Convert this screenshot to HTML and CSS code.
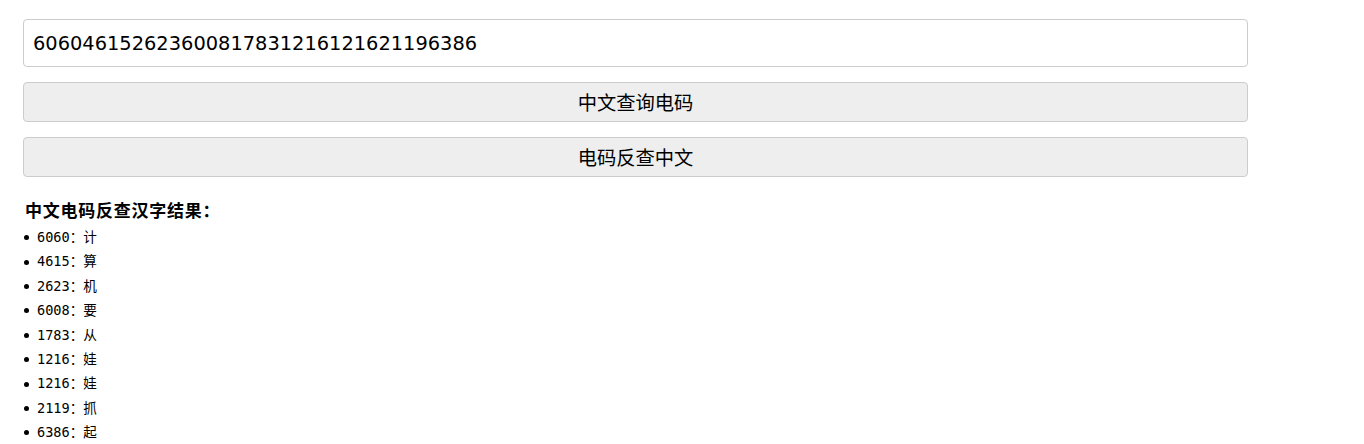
FILE: index.html
```html
<!DOCTYPE html>
<html lang="zh-CN">
<head>
<meta charset="utf-8">
<title>中文电码查询</title>
<link rel="stylesheet" href="styles.css">
</head>
<body>
<div class="page">
  <input class="code-input" type="text" value="606046152623600817831216121621196386">
  <button class="action-btn" type="button">中文查询电码</button>
  <button class="action-btn" type="button">电码反查中文</button>
  <div class="result">
    <h3 class="result-title">中文电码反查汉字结果：</h3>
    <ul class="result-list">
      <li>6060：计</li>
      <li>4615：算</li>
      <li>2623：机</li>
      <li>6008：要</li>
      <li>1783：从</li>
      <li>1216：娃</li>
      <li>1216：娃</li>
      <li>2119：抓</li>
      <li>6386：起</li>
    </ul>
  </div>
</div>
</body>
</html>
```

FILE: styles.css
```css
html, body {
  margin: 0;
  padding: 0;
  background: #fff;
}

.page {
  display: flex;
  flex-direction: column;
  gap: 15px;
  width: 1225px;
  padding: 19px 0 0 23px;
}

.code-input {
  box-sizing: border-box;
  width: 100%;
  height: 48px;
  margin: 0;
  padding: 0 9px;
  border: 1px solid #cccccc;
  border-radius: 4px;
  background: #fff;
  color: #000;
  font-family: "DejaVu Sans", "Noto Sans CJK SC", sans-serif;
  font-size: 19.4px;
  outline: none;
}

.action-btn {
  box-sizing: border-box;
  width: 100%;
  height: 40px;
  margin: 0;
  padding: 0;
  border: 1px solid #cccccc;
  border-radius: 4px;
  background: #eeeeee;
  color: #000;
  font-family: "Noto Sans CJK SC", sans-serif;
  font-size: 19.3px;
  line-height: 38px;
}

.result {
  margin-top: 6px;
  padding-left: 1px;
}

.result-title {
  margin: 0;
  padding-left: 1px;
  font-family: "Noto Sans CJK SC", serif;
  font-weight: bold;
  font-size: 17px;
  letter-spacing: 0.75px;
  line-height: 24px;
  color: #000;
}

.result-list {
  margin: 3px 0 0 0;
  padding: 0;
  list-style: none;
  font-family: "DejaVu Sans Mono", "Noto Sans CJK SC", monospace;
  font-size: 13.6px;
  color: #000;
}

.result-list li {
  display: flex;
  align-items: center;
  gap: 8px;
  height: 24.4px;
  line-height: 24.4px;
}

.result-list li::before {
  content: "";
  flex: none;
  width: 5px;
  height: 5px;
  margin-top: 1px;
  border-radius: 50%;
  background: #000;
}
```
